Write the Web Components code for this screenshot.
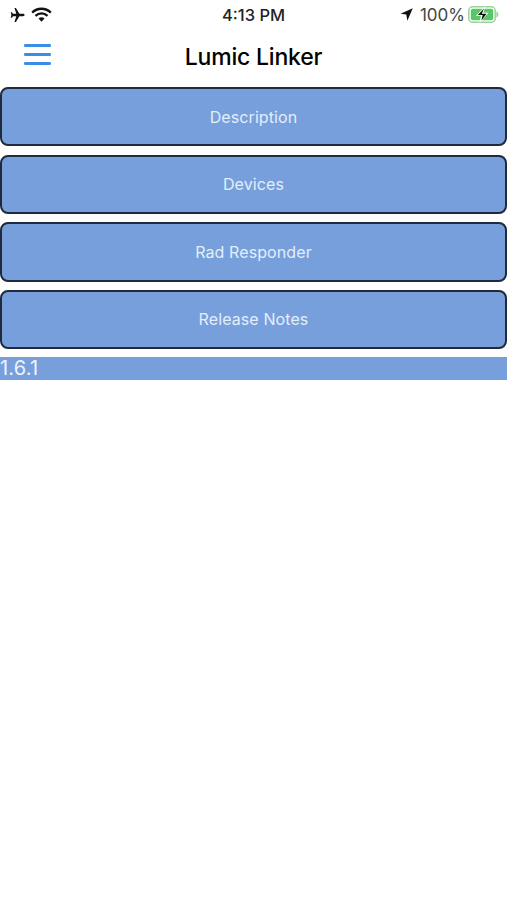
<!DOCTYPE html>
<html>
<head>
<meta charset="utf-8">
<title>Lumic Linker</title>
<style>
  html, body { margin: 0; background: #fff; }
  body { font-family: "Inter", "Liberation Sans", sans-serif; }
</style>
</head>
<body>
<status-bar></status-bar>
<nav-header>Lumic Linker</nav-header>
<link-list>
  <link-button>Description</link-button>
  <link-button>Devices</link-button>
  <link-button>Rad Responder</link-button>
  <link-button>Release Notes</link-button>
</link-list>
<version-bar>1.6.1</version-bar>

<script>
class StatusBar extends HTMLElement {
  constructor() {
    super();
    this.attachShadow({ mode: "open" });
  }

  connectedCallback() {
    this.shadowRoot.innerHTML = `
      <style>
        :host {
          display: grid;
          grid-template-columns: 1fr auto 1fr;
          align-items: center;
          height: 29px;
          padding: 0 8px;
          color: #222;
          font: 500 16.5px "Inter", "Liberation Sans", sans-serif;
        }
        .left, .right { display: flex; align-items: center; }
        .left { gap: 6px; margin-left: 2px; }
        .right { justify-content: flex-end; }
        .pct { margin: 0 3px 0 7px; color: #444; font-size: 17px; font-weight: 400; }
        svg { display: block; }
      </style>
      <div class="left">
        <svg width="15" height="14" viewBox="0 0 15 14"><path fill="#111" d="M14.6 7c0-.7-.8-1.2-1.6-1.2H9.4L5.9 0H4.5l1.8 5.8H3L1.8 4.2H.7L1.4 7 .7 9.8h1.1L3 8.2h3.3L4.5 14h1.4l3.5-5.8H13c.8 0 1.6-.5 1.6-1.2z"/></svg>
        <svg width="21" height="15" viewBox="0 0 21 15"><g fill="none" stroke="#111" stroke-width="2.3"><path d="M1.2 5.6a13.2 13.2 0 0 1 18.6 0"/><path d="M4.5 8.9a8.6 8.6 0 0 1 12 0"/></g><path fill="#111" d="M7.5 11.6a4.3 4.3 0 0 1 6 0l-3 3.2z"/></svg>
      </div>
      <div class="time">4:13 PM</div>
      <div class="right">
        <svg width="13" height="13" viewBox="0 0 12 12"><path fill="#111" d="M11.8.3.5 5.2l5.3.8 1 5.7z"/></svg>
        <span class="pct">100%</span>
        <svg width="31" height="17" viewBox="0 0 31 17">
          <rect x=".8" y=".8" width="26.4" height="15.4" rx="3.8" fill="#fff" stroke="#9ad29a" stroke-width="1.5"/>
          <rect x="2.8" y="2.8" width="22.4" height="11.4" rx="2" fill="#58c765"/>
          <path d="M28.4 5.6c1.3.3 2 1.5 2 2.9s-.7 2.6-2 2.9z" fill="#9ad29a"/>
          <path fill="#fff" d="M17.4 0 7.8 9.8h5.2L11.4 17l9.2-10.2h-5.2z"/>
          <path fill="#111" d="M16 2.6 9.8 9h4.8l-1.2 5.4L18.6 7.8h-4.8z"/>
        </svg>
      </div>
    `;
  }
}

class NavHeader extends HTMLElement {
  constructor() {
    super();
    this.attachShadow({ mode: "open" });
  }

  connectedCallback() {
    this.shadowRoot.innerHTML = `
      <style>
        :host {
          display: grid;
          grid-template-columns: 1fr auto 1fr;
          align-items: center;
          box-sizing: border-box;
          height: 58px;
          padding-bottom: 2px;
          color: #000;
        }
        svg { display: block; margin: 0 0 4px 24px; }
        .title { font: 500 23px "Inter", "Liberation Sans", sans-serif; letter-spacing: -.2px; }
      </style>
      <svg width="27" height="22" viewBox="0 0 27 22">
        <g fill="#3a8ee6">
          <rect y="0" width="27" height="3" rx="1.2"/>
          <rect y="9" width="27" height="3" rx="1.2"/>
          <rect y="18" width="27" height="3" rx="1.2"/>
        </g>
      </svg>
      <div class="title"><slot></slot></div>
      <span></span>
    `;
  }
}

class LinkList extends HTMLElement {
  constructor() {
    super();
    this.attachShadow({ mode: "open" });
  }

  connectedCallback() {
    this.shadowRoot.innerHTML = `
      <style>
        :host { display: flex; flex-direction: column; gap: 8.2px; }
      </style>
      <slot></slot>
    `;
  }
}

class LinkButton extends HTMLElement {
  constructor() {
    super();
    this.attachShadow({ mode: "open" });
  }

  connectedCallback() {
    this.shadowRoot.innerHTML = `
      <style>
        :host {
          display: flex;
          align-items: center;
          justify-content: center;
          box-sizing: border-box;
          height: 59.4px;
          background: #769fdc;
          border: 2px solid #1f2a3d;
          border-radius: 8px;
          color: #e3eefb;
          font: 400 16px "Inter", "Liberation Sans", sans-serif;
          letter-spacing: .1px;
        }
      </style>
      <slot></slot>
    `;
  }
}

class VersionBar extends HTMLElement {
  constructor() {
    super();
    this.attachShadow({ mode: "open" });
  }

  connectedCallback() {
    this.shadowRoot.innerHTML = `
      <style>
        :host {
          display: block;
          box-sizing: border-box;
          height: 22.5px;
          margin-top: 8.2px;
          background: #769fdc;
          color: #eef3fb;
          font: 400 20px/22.5px "Inter", "Liberation Sans", sans-serif;
          letter-spacing: .2px;
        }
      </style>
      <slot></slot>
    `;
  }
}

customElements.define("status-bar", StatusBar);
customElements.define("nav-header", NavHeader);
customElements.define("link-list", LinkList);
customElements.define("link-button", LinkButton);
customElements.define("version-bar", VersionBar);
</script>
</body>
</html>
